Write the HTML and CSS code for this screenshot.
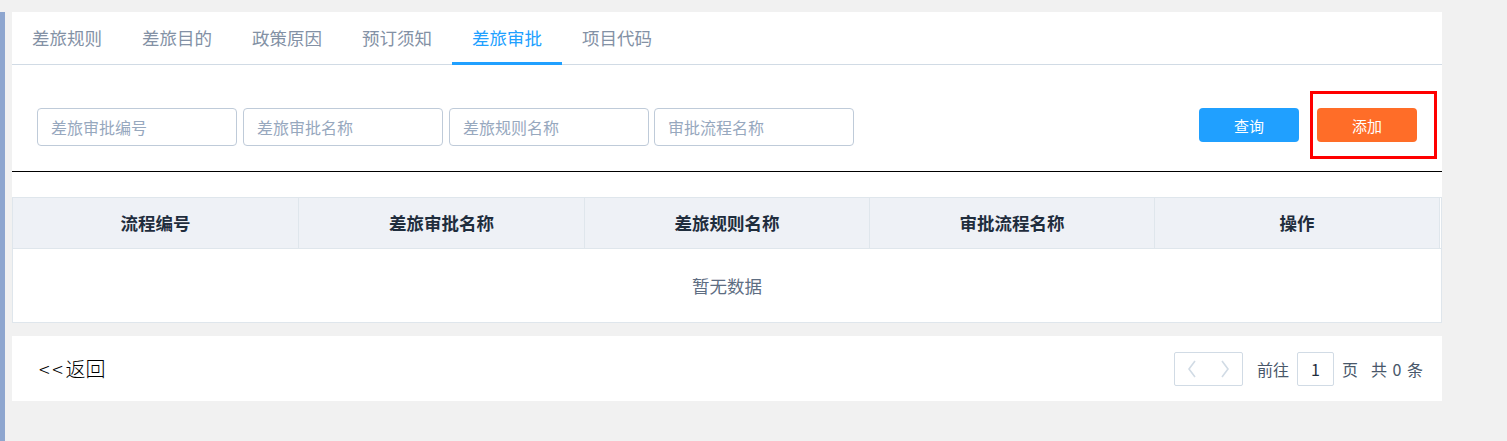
FILE: index.html
```html
<!DOCTYPE html>
<html lang="zh-CN">
<head>
<meta charset="utf-8">
<title>差旅审批</title>
<link rel="stylesheet" href="styles.css">
</head>
<body>
<div class="page">
  <div class="edge"></div>
  <div class="main">
    <section class="panel">
      <nav class="tabs">
        <a class="tab">差旅规则</a>
        <a class="tab">差旅目的</a>
        <a class="tab">政策原因</a>
        <a class="tab">预订须知</a>
        <a class="tab active">差旅审批</a>
        <a class="tab">项目代码</a>
      </nav>
      <div class="search">
        <div class="fields">
          <input class="field" placeholder="差旅审批编号">
          <input class="field" placeholder="差旅审批名称">
          <input class="field" placeholder="差旅规则名称">
          <input class="field field-last" placeholder="审批流程名称">
        </div>
        <div class="actions">
          <button class="btn btn-query">查询</button>
          <button class="btn btn-add">添加<span class="highlight"></span></button>
        </div>
      </div>
      <div class="divider"></div>
      <div class="table">
        <div class="thead">
          <div class="th">流程编号</div>
          <div class="th">差旅审批名称</div>
          <div class="th">差旅规则名称</div>
          <div class="th">审批流程名称</div>
          <div class="th">操作</div>
          <div class="gutter"></div>
        </div>
        <div class="tbody"><span>暂无数据</span></div>
      </div>
    </section>
    <footer class="bar">
      <a class="back"><span class="arrows">&lt;&lt;</span>返回</a>
      <div class="pager">
        <div class="pager-nav">
          <span class="pager-btn"><svg width="10" height="18" viewBox="0 0 10 18"><path d="M8 1 L2 9 L8 17" fill="none" stroke="#d1dbe5" stroke-width="1.6"/></svg></span>
          <span class="pager-btn"><svg width="10" height="18" viewBox="0 0 10 18"><path d="M2 1 L8 9 L2 17" fill="none" stroke="#d1dbe5" stroke-width="1.6"/></svg></span>
        </div>
        <span class="goto">前往</span>
        <input class="page-input" value="1">
        <span>页</span>
        <span class="total">共 0 条</span>
      </div>
    </footer>
  </div>
</div>
</body>
</html>
```

FILE: styles.css
```css
html, body {
  margin: 0;
  padding: 0;
}
body {
  background: #f1f1f1;
  font-family: "Noto Sans CJK SC", "Microsoft YaHei", sans-serif;
}
.page {
  display: flex;
  padding-top: 12px;
  height: 441px;
  box-sizing: border-box;
}
.edge {
  flex: none;
  width: 5px;
  background: #8ea6cf;
}
.main {
  margin-left: 7px;
  width: 1430px;
}
.panel {
  background: #fff;
}
.tabs {
  display: flex;
  height: 52px;
  border-bottom: 1px solid #d1dbe5;
}
.tab {
  position: relative;
  width: 70px;
  padding: 0 20px;
  font-size: 17.5px;
  line-height: 52px;
  color: #8391a5;
  text-align: center;
  white-space: nowrap;
}
.tab.active {
  color: #20a0ff;
}
.tab.active::after {
  content: "";
  position: absolute;
  left: 0;
  right: 0;
  bottom: -1px;
  height: 3px;
  background: #20a0ff;
}
.search {
  display: flex;
  justify-content: space-between;
  align-items: flex-start;
  padding: 43px 25px 25px;
}
.fields {
  display: flex;
  gap: 6px;
}
.field {
  width: 200px;
  height: 38px;
  box-sizing: border-box;
  border: 1px solid #bfcbd9;
  border-radius: 4px;
  padding: 0 13px;
  font-family: inherit;
  font-size: 16px;
  color: #1f2d3d;
  outline: none;
}
.field-last {
  margin-left: -1px;
}
.field::placeholder {
  color: #97a8be;
}
.actions {
  display: flex;
  gap: 18px;
}
.btn {
  position: relative;
  width: 100px;
  height: 34px;
  border: 0;
  border-radius: 4px;
  color: #fff;
  font-family: inherit;
  font-size: 15px;
  padding: 0;
}
.btn-query {
  background: #20a0ff;
}
.btn-add {
  background: #ff6d28;
}
.highlight {
  position: absolute;
  left: -7px;
  right: -20px;
  top: -17px;
  bottom: -17px;
  border: 3px solid #ff0000;
  pointer-events: none;
}
.divider {
  height: 1px;
  background: #000;
}
.table {
  margin-top: 25px;
  border: 1px solid #dfe6ec;
}
.thead {
  display: grid;
  grid-template-columns: 286px 286px 285px 285px 285px 1fr;
  background: #eef1f6;
  border-bottom: 1px solid #dfe6ec;
}
.th {
  box-sizing: border-box;
  height: 50px;
  line-height: 50px;
  text-align: center;
  font-size: 17.5px;
  font-weight: bold;
  color: #1f2d3d;
  border-right: 1px solid #dfe6ec;
}
.gutter {
  background: #fff;
}
.tbody {
  height: 73px;
  display: flex;
  align-items: center;
  justify-content: center;
  font-size: 17.5px;
  color: #5e6d82;
}
.bar {
  margin-top: 13px;
  height: 65px;
  background: #fff;
  display: flex;
  align-items: center;
  justify-content: space-between;
  padding: 0 19px 0 27px;
}
.back {
  font-size: 20px;
  font-weight: 300;
  color: #000;
}
.arrows {
  letter-spacing: 2.5px;
}
.pager {
  display: flex;
  align-items: center;
  font-size: 16px;
  color: #48576a;
}
.pager-nav {
  display: flex;
  width: 69px;
  height: 34px;
  box-sizing: border-box;
  border: 1px solid #d1dbe5;
  border-radius: 2px;
}
.pager-btn {
  flex: 1;
  display: flex;
  align-items: center;
  justify-content: center;
}
.goto {
  margin-left: 14px;
}
.page-input {
  width: 37px;
  height: 34px;
  box-sizing: border-box;
  margin: 0 8px;
  border: 1px solid #d1dbe5;
  border-radius: 2px;
  text-align: center;
  font-family: inherit;
  font-size: 16px;
  color: #1f2d3d;
  padding: 0;
  outline: none;
}
.total {
  margin-left: 13px;
  word-spacing: 2px;
}
```
